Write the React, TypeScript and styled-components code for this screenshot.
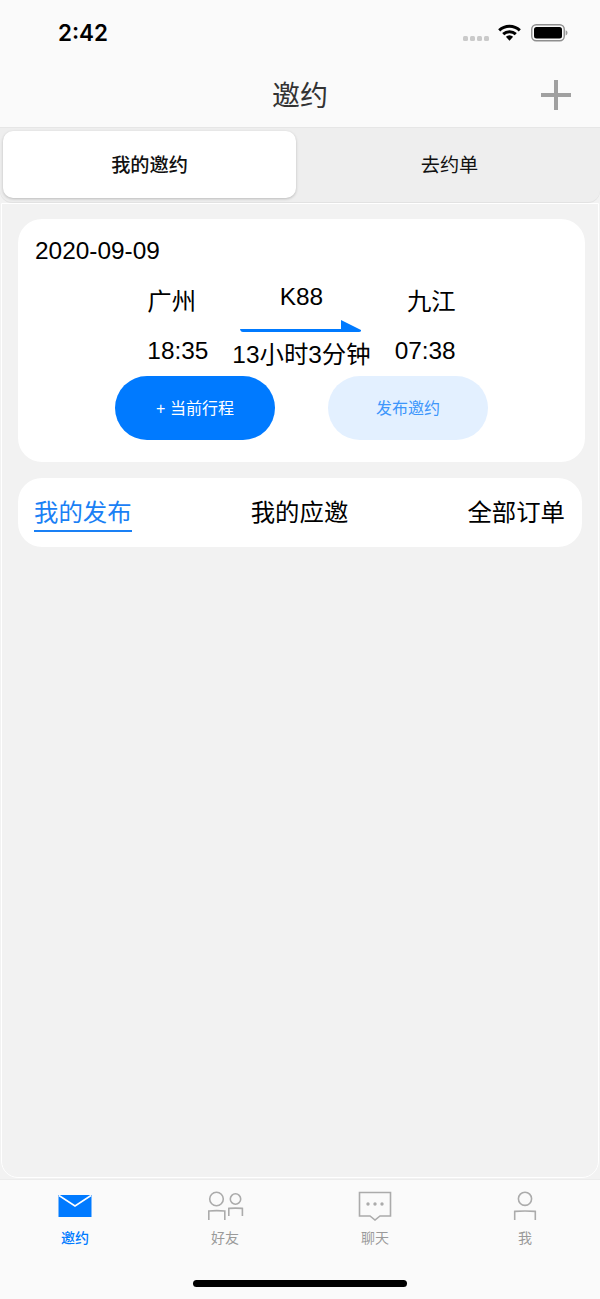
import React from 'react';
import styled, { createGlobalStyle } from 'styled-components';

const Global = createGlobalStyle`
  html, body { margin: 0; padding: 0; background: #f2f2f2; }
  * { box-sizing: border-box; }
  body { font-family: "Liberation Sans", "Noto Sans CJK SC", sans-serif; }
`;
const Page = styled.div`
  width: 600px; height: 1299px; display: flex; flex-direction: column; overflow: hidden; background: #f2f2f2;
`;
const Header = styled.header`
  height: 128px; background: #fafafa; border-bottom: 1px solid #e6e6e6; flex: none;
`;
const StatusBar = styled.div`
  height: 60px; display: flex; align-items: flex-start; justify-content: space-between; padding: 19px 32px 0 58px;
`;
const Clock = styled.span`
  font: 600 22.4px/28px Inter, "Liberation Sans", sans-serif; color: #000;
`;
const StatusIcons = styled.div`
  display: flex; align-items: flex-start; margin-top: 5px;
`;
const Signal = styled.div`
  display: flex; gap: 2px; margin: 12px 9px 0 0;
`;
const SignalDot = styled.i`
  width: 5px; height: 5px; border-radius: 1.5px; background: #cacaca; display: block;
`;
const NavBar = styled.div`
  height: 67px; display: grid; grid-template-columns: 1fr auto 1fr; align-items: center; padding: 2px 29px 0;
`;
const Title = styled.h1`
  grid-column: 2; margin: 4px 0 0; font-size: 28px; line-height: 40px; font-weight: 400; color: #333;
`;
const PlusButton = styled.div`
  justify-self: end; width: 30px; height: 30px; display: block;
`;
const Segment = styled.div`
  height: 74px; flex: none; background: #eeeeee; border-radius: 0 0 12px 12px; display: flex; padding: 3px 0 4px 3px;
  box-shadow: 0 1px 0 #e2e2e2;
`;
const SegmentItem = styled.div<{ $active?: boolean }>`
  width: ${p => (p.$active ? '293px' : '304px')};
  padding: ${p => (p.$active ? '0 0 2px' : '0 0 2px 3px')};
  display: flex; align-items: center; justify-content: center;
  font-size: 19.2px; color: #111; font-weight: ${p => (p.$active ? 500 : 400)};
  background: ${p => (p.$active ? '#fff' : 'transparent')};
  border-radius: 10px;
  box-shadow: ${p => (p.$active ? '0 1px 3px rgba(0,0,0,.22)' : 'none')};
`;
const Content = styled.main`
  margin: 1px 1px 0; height: 975px; flex: none; background: #f2f2f2; border: 1px solid #fff; border-radius: 0 0 17px 17px;
  padding: 15px 16px 0;
  display: flex; flex-direction: column; align-items: flex-start; gap: 16px;
`;
const TripCard = styled.section`
  width: 567px; height: 243px; background: #fff; border-radius: 24px; padding: 16px 17px 22px;
  display: flex; flex-direction: column; flex: none;
`;
const DateText = styled.div`
  font-size: 24.4px; line-height: 32px; color: #000;
`;
const Route = styled.div`
  margin-top: 13px; display: flex; justify-content: center; gap: 24px;
`;
const Stop = styled.div<{ $end?: boolean }>`
  padding-top: 5px; display: flex; flex-direction: column; align-items: ${p => (p.$end ? 'flex-end' : 'flex-start')};
  gap: 15px;
`;
const RouteText = styled.div`
  font-size: 24.4px; line-height: 34px; color: #000; white-space: nowrap;
`;
const Middle = styled.div`
  display: flex; flex-direction: column; align-items: center; gap: 6px;
`;
const Arrow = styled.svg`
  display: block; width: 121px; height: 12px; margin-left: -2px;
`;
const Actions = styled.div`
  margin-top: 4px; display: flex; justify-content: center; gap: 53px;
`;
const Pill = styled.div<{ $primary?: boolean }>`
  width: 160px; height: 64px; border-radius: 32px; display: flex; align-items: center; justify-content: center;
  font-size: 16px; padding-bottom: 3px;
  background: ${p => (p.$primary ? '#007aff' : '#e3f0ff')};
  color: ${p => (p.$primary ? '#fff' : '#3d96fb')};
`;
const FilterCard = styled.nav`
  width: 564px; height: 69px; flex: none; background: #fff; border-radius: 24px; padding: 0 17px 0 16px;
  display: flex; align-items: flex-start; justify-content: space-between;
`;
const Filter = styled.div<{ $active?: boolean }>`
  margin-top: 18px; height: 36px; font-size: 24.4px; line-height: 34px;
  color: ${p => (p.$active ? '#1a80f5' : '#000')};
  border-bottom: ${p => (p.$active ? '2px solid #1a80f5' : 'none')};
`;
const TabBar = styled.footer`
  margin-top: 1px; flex: 1; background: #fafafa; border-top: 1px solid #ececec; position: relative;
`;
const TabRow = styled.div`
  display: grid; grid-template-columns: repeat(4, 150px); padding-top: 11px;
`;
const Tab = styled.div<{ $active?: boolean }>`
  display: flex; flex-direction: column; align-items: center; gap: 7px;
  font-size: 14px; line-height: 20px; color: ${p => (p.$active ? '#007aff' : '#9a9a9a')};
  font-weight: ${p => (p.$active ? 500 : 400)};
`;
const TabIcon = styled.svg`
  width: 40px; height: 30px; display: block; fill: none; stroke: #ababab; stroke-width: 1.6;
`;
const HomeBar = styled.div`
  position: absolute; left: 193px; bottom: 12px; width: 214px; height: 7px; border-radius: 4px; background: #000;
`;

export default function App() {
  return (
    <Page>
      <Global />
      <Header>
        <StatusBar>
          <Clock>2:42</Clock>
          <StatusIcons>
            <Signal><SignalDot /><SignalDot /><SignalDot /><SignalDot /></Signal>
            <svg width="23" height="17" viewBox="0 0 23 17" style={{ marginRight: 10 }}>
              <path d="M1.2 6.4 A15 15 0 0 1 21.8 6.4" fill="none" stroke="#000" strokeWidth="3" />
              <path d="M5.2 10.2 A9.2 9.2 0 0 1 17.8 10.2" fill="none" stroke="#000" strokeWidth="3" />
              <path d="M7.9 12.8 A5 5 0 0 1 15.1 12.8 L11.5 16.8 Z" fill="#000" />
            </svg>
            <svg width="37" height="18" viewBox="0 0 37 18">
              <rect x="0.75" y="0.75" width="32.5" height="16" rx="4.5" fill="none" stroke="#8e8e8e" strokeWidth="1.4" />
              <rect x="3" y="3" width="28" height="11.5" rx="2.5" fill="#000" />
              <path d="M34.6 6.2 C36 6.6 36.5 7.6 36.5 8.8 C36.5 10 36 11 34.6 11.4 Z" fill="#9a9a9a" />
            </svg>
          </StatusIcons>
        </StatusBar>
        <NavBar>
          <Title>邀约</Title>
          <PlusButton>
            <svg width="30" height="30" viewBox="0 0 30 30"><path d="M15 0V30M0 15H30" stroke="#a0a0a0" strokeWidth="4" /></svg>
          </PlusButton>
        </NavBar>
      </Header>
      <Segment>
        <SegmentItem $active>我的邀约</SegmentItem>
        <SegmentItem>去约单</SegmentItem>
      </Segment>
      <Content>
        <TripCard>
          <DateText>2020-09-09</DateText>
          <Route>
            <Stop>
              <RouteText>广州</RouteText>
              <RouteText>18:35</RouteText>
            </Stop>
            <Middle>
              <RouteText>K88</RouteText>
              <Arrow viewBox="0 0 121 12">
                <path d="M0 9H101V0L121 10Q121.5 12 119 12H3Q0.5 12 0 9Z" fill="#007aff" />
              </Arrow>
              <RouteText>13小时3分钟</RouteText>
            </Middle>
            <Stop $end>
              <RouteText>九江</RouteText>
              <RouteText>07:38</RouteText>
            </Stop>
          </Route>
          <Actions>
            <Pill $primary>+ 当前行程</Pill>
            <Pill>发布邀约</Pill>
          </Actions>
        </TripCard>
        <FilterCard>
          <Filter $active>我的发布</Filter>
          <Filter>我的应邀</Filter>
          <Filter>全部订单</Filter>
        </FilterCard>
      </Content>
      <TabBar>
        <TabRow>
          <Tab $active>
            <TabIcon viewBox="0 0 40 30">
              <rect x="3.5" y="4" width="33" height="22" fill="#007aff" stroke="none" />
              <path d="M4 4.5L20 15L36 4.5" stroke="#fff" strokeWidth="1.5" />
            </TabIcon>
            邀约
          </Tab>
          <Tab>
            <TabIcon viewBox="0 0 40 30">
              <circle cx="11.5" cy="8" r="6.8" />
              <path d="M3.8 29V20Q11.5 19.2 19.8 20V29" />
              <circle cx="30.5" cy="8" r="5.2" />
              <path d="M23.8 25V17.4Q30.5 16.8 37.4 17.4V25" />
            </TabIcon>
            好友
          </Tab>
          <Tab>
            <TabIcon viewBox="0 0 40 30">
              <path d="M4.5 1.5H35.5V25H25L20 29L15 25H4.5Z" />
              <circle cx="13" cy="13" r="1.7" fill="#ababab" stroke="none" />
              <circle cx="20" cy="13" r="1.7" fill="#ababab" stroke="none" />
              <circle cx="27" cy="13" r="1.7" fill="#ababab" stroke="none" />
            </TabIcon>
            聊天
          </Tab>
          <Tab>
            <TabIcon viewBox="0 0 40 30">
              <circle cx="20" cy="7.8" r="6.6" />
              <path d="M9.7 29V20.4Q20 19.6 30.3 20.4V29" />
            </TabIcon>
            我
          </Tab>
        </TabRow>
        <HomeBar />
      </TabBar>
    </Page>
  );
}
